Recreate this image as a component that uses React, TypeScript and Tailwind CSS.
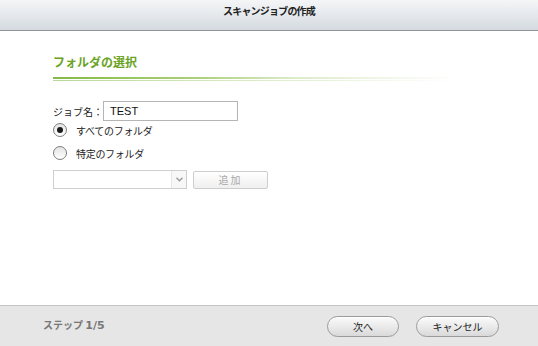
import React from "react";

const JP = { fontFamily: '"Noto Sans CJK JP", "Liberation Sans", sans-serif' };

function Radio({ checked, label }: { checked?: boolean; label: string }) {
  return (
    <div className="flex items-center h-[18px]">
      <span className="w-[14px] h-[14px] rounded-full border border-[#7d7d7d] bg-[linear-gradient(#e4e4e4,#ffffff)] flex items-center justify-center">
        {checked && <span className="w-[6px] h-[6px] rounded-full bg-[#1a1a1a]" />}
      </span>
      <span className="ml-[9px] text-[10px] tracking-[-0.3px] text-[#222]" style={JP}>
        {label}
      </span>
    </div>
  );
}

function PillButton({ label, width }: { label: string; width: string }) {
  return (
    <button
      className={`${width} h-[21px] rounded-full border border-[#9a9a9a] bg-[linear-gradient(#fbfbfb,#e9e9e9_55%,#d9d9d9)] text-[10px] text-[#222] shadow-[inset_0_1px_0_#fff]`}
      style={JP}
    >
      {label}
    </button>
  );
}

export default function App() {
  return (
    <div className="w-[538px] h-[346px] flex flex-col bg-white overflow-hidden">
      <div className="h-[31px] shrink-0 flex items-start justify-center pt-[4px] border-b border-[#8f9499] bg-[linear-gradient(#f4f5f7,#e2e6ea_60%,#d4dae0)]">
        <span className="text-[10px] font-bold text-[#222] leading-[14px] tracking-[-0.8px]" style={JP}>
          スキャンジョブの作成
        </span>
      </div>

      <div className="flex-1 flex flex-col pl-[53px] pt-[23px]">
        <div className="h-[16px] text-[12px] font-bold leading-[16px] text-[#6aa323]" style={JP}>
          フォルダの選択
        </div>
        <div className="mt-[7px] w-[400px] h-[2px] bg-[linear-gradient(to_right,#86b947,#a9cf78_35%,#dcebc8_60%,#ffffff)]" />
        <div className="mt-[1px] w-[400px] h-[1px] bg-[linear-gradient(to_right,#b9d898,#d7e9c2_45%,#ffffff)]" />

        <div className="mt-[20px] flex items-center h-[20px]">
          <span className="w-[50px] text-[10px] text-[#222]" style={JP}>
            ジョブ名：
          </span>
          <div
            className="w-[135px] h-[20px] border border-[#b5b5b5] bg-white flex items-center pl-[6px] text-[11px] text-[#111]"
            style={{ fontFamily: '"Liberation Sans", sans-serif' }}
          >
            TEST
          </div>
        </div>

        <div>
          <Radio checked label="すべてのフォルダ" />
        </div>
        <div className="mt-[5px]">
          <Radio label="特定のフォルダ" />
        </div>

        <div className="mt-[8px] flex items-center">
          <div className="w-[134px] h-[19px] border border-[#cfcfcf] bg-white flex justify-end">
            <div className="w-[15px] h-full border-l border-[#e6e6e6] bg-[#f7f7f7] flex items-center justify-center">
              <svg width="7" height="5" viewBox="0 0 7 5">
                <path d="M0.5 0.8 L3.5 3.8 L6.5 0.8" fill="none" stroke="#9a9a9a" strokeWidth="1.4" />
              </svg>
            </div>
          </div>
          <div
            className="ml-[6px] w-[75px] h-[18px] rounded-[2px] border border-[#cdcdcd] bg-[linear-gradient(#ffffff,#efefef)] flex items-center justify-center text-[10px] text-[#a8a8a8] tracking-[2px]"
            style={JP}
          >
            追加
          </div>
        </div>
      </div>

      <div className="h-[41px] shrink-0 border-t border-[#c4c4c4] bg-[#e6e6e6] flex items-center pl-[43px] pr-[39px]">
        <span className="text-[10px] font-bold text-[#777]" style={JP}>
          ステップ <span className="text-[11px]" style={{ fontFamily: '"DejaVu Sans", sans-serif' }}>1/5</span>
        </span>
        <div className="ml-auto flex items-center gap-[17px]">
          <PillButton label="次へ" width="w-[72px]" />
          <PillButton label="キャンセル" width="w-[83px]" />
        </div>
      </div>
    </div>
  );
}
